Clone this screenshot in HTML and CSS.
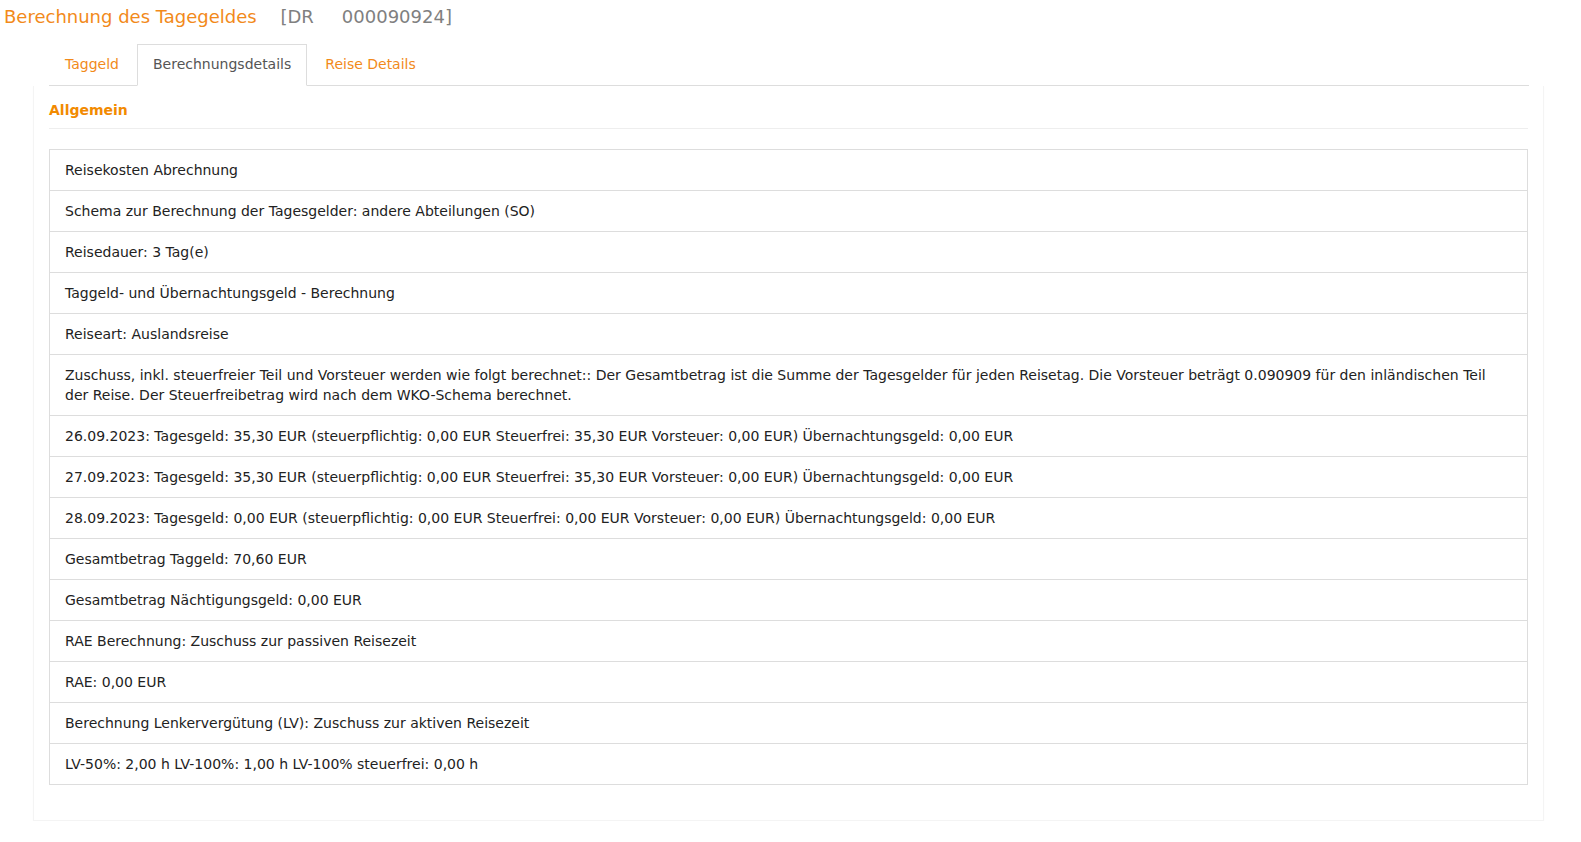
FILE: index.html
```
<!DOCTYPE html>
<html lang="de">
<head>
  <meta charset="UTF-8" />
  <title>Berechnung des Tagegeldes</title>
  <meta name="viewport" content="width=device-width, initial-scale=1.0">
  <link rel="stylesheet" href="styles.css">
</head>
<body>
  <h1 class="page-title">
    Berechnung des Tagegeldes
    <span class="doc-ref">[DR</span><span class="doc-no">000090924]</span>
  </h1>

  <div class="content">
    <ul class="tabs">
      <li class="tab"><a href="#">Taggeld</a></li>
      <li class="tab active"><a href="#">Berechnungsdetails</a></li>
      <li class="tab"><a href="#">Reise Details</a></li>
    </ul>

    <div class="panel">
      <h2 class="section-title">Allgemein</h2>

      <ul class="details">
        <li>Reisekosten Abrechnung</li>
        <li>Schema zur Berechnung der Tagesgelder: andere Abteilungen (SO)</li>
        <li>Reisedauer: 3 Tag(e)</li>
        <li>Taggeld- und Übernachtungsgeld - Berechnung</li>
        <li>Reiseart: Auslandsreise</li>
        <li>Zuschuss, inkl. steuerfreier Teil und Vorsteuer werden wie folgt berechnet:: Der Gesamtbetrag ist die Summe der Tagesgelder für jeden Reisetag. Die Vorsteuer beträgt 0.090909 für den inländischen Teil der Reise. Der Steuerfreibetrag wird nach dem WKO-Schema berechnet.</li>
        <li>26.09.2023: Tagesgeld: 35,30 EUR (steuerpflichtig: 0,00 EUR Steuerfrei: 35,30 EUR Vorsteuer: 0,00 EUR) Übernachtungsgeld: 0,00 EUR</li>
        <li>27.09.2023: Tagesgeld: 35,30 EUR (steuerpflichtig: 0,00 EUR Steuerfrei: 35,30 EUR Vorsteuer: 0,00 EUR) Übernachtungsgeld: 0,00 EUR</li>
        <li>28.09.2023: Tagesgeld: 0,00 EUR (steuerpflichtig: 0,00 EUR Steuerfrei: 0,00 EUR Vorsteuer: 0,00 EUR) Übernachtungsgeld: 0,00 EUR</li>
        <li>Gesamtbetrag Taggeld: 70,60 EUR</li>
        <li>Gesamtbetrag Nächtigungsgeld: 0,00 EUR</li>
        <li>RAE Berechnung: Zuschuss zur passiven Reisezeit</li>
        <li>RAE: 0,00 EUR</li>
        <li>Berechnung Lenkervergütung (LV): Zuschuss zur aktiven Reisezeit</li>
        <li>LV-50%: 2,00 h LV-100%: 1,00 h LV-100% steuerfrei: 0,00 h</li>
      </ul>
    </div>
  </div>
</body>
</html>
```

FILE: styles.css
```
body {
  margin: 0;
  background: #fff;
  color: #222;
  font-family: "DejaVu Sans", Verdana, sans-serif;
  font-size: 14px;
  line-height: 20px;
}

.page-title {
  margin: 0;
  padding: 5px 0 0 4px;
  height: 29px;
  font-size: 18px;
  line-height: 24px;
  font-weight: normal;
  color: #f28a1a;
}

.doc-ref {
  color: #808080;
  margin-left: 18px;
}

.doc-no {
  color: #808080;
  margin-left: 28px;
}

.content {
  margin: 0 37px 0 33px;
}

.tabs {
  list-style: none;
  margin: 0 15px 0 16px;
  padding: 10px 0 0;
  display: flex;
  border-bottom: 1px solid #ddd;
}

.tab {
  margin-right: 2px;
  margin-bottom: -1px;
}

.tab a {
  display: block;
  padding: 9px 15px 11px;
  border: 1px solid transparent;
  border-bottom: 0;
  color: #f28a1a;
  text-decoration: none;
}

.tab.active a {
  color: #555;
  background: #fff;
  border-color: #ddd;
  border-bottom: 1px solid #fff;
}

.panel {
  border: 1px solid #f4f4f4;
  border-top: 0;
  box-shadow: 0 1px 1px rgba(0, 0, 0, 0.04);
  padding: 0 15px 35px 15px;
}

.section-title {
  margin: 0;
  padding: 14px 0 8px;
  font-size: 14px;
  line-height: 20px;
  font-weight: bold;
  color: #f28a00;
  border-bottom: 1px solid #eee;
}

.details {
  list-style: none;
  margin: 20px 0 0;
  padding: 0;
  border: 1px solid #ddd;
}

.details li {
  padding: 10px 15px;
  border-top: 1px solid #ddd;
}

.details li:first-child {
  border-top: 0;
}
```
